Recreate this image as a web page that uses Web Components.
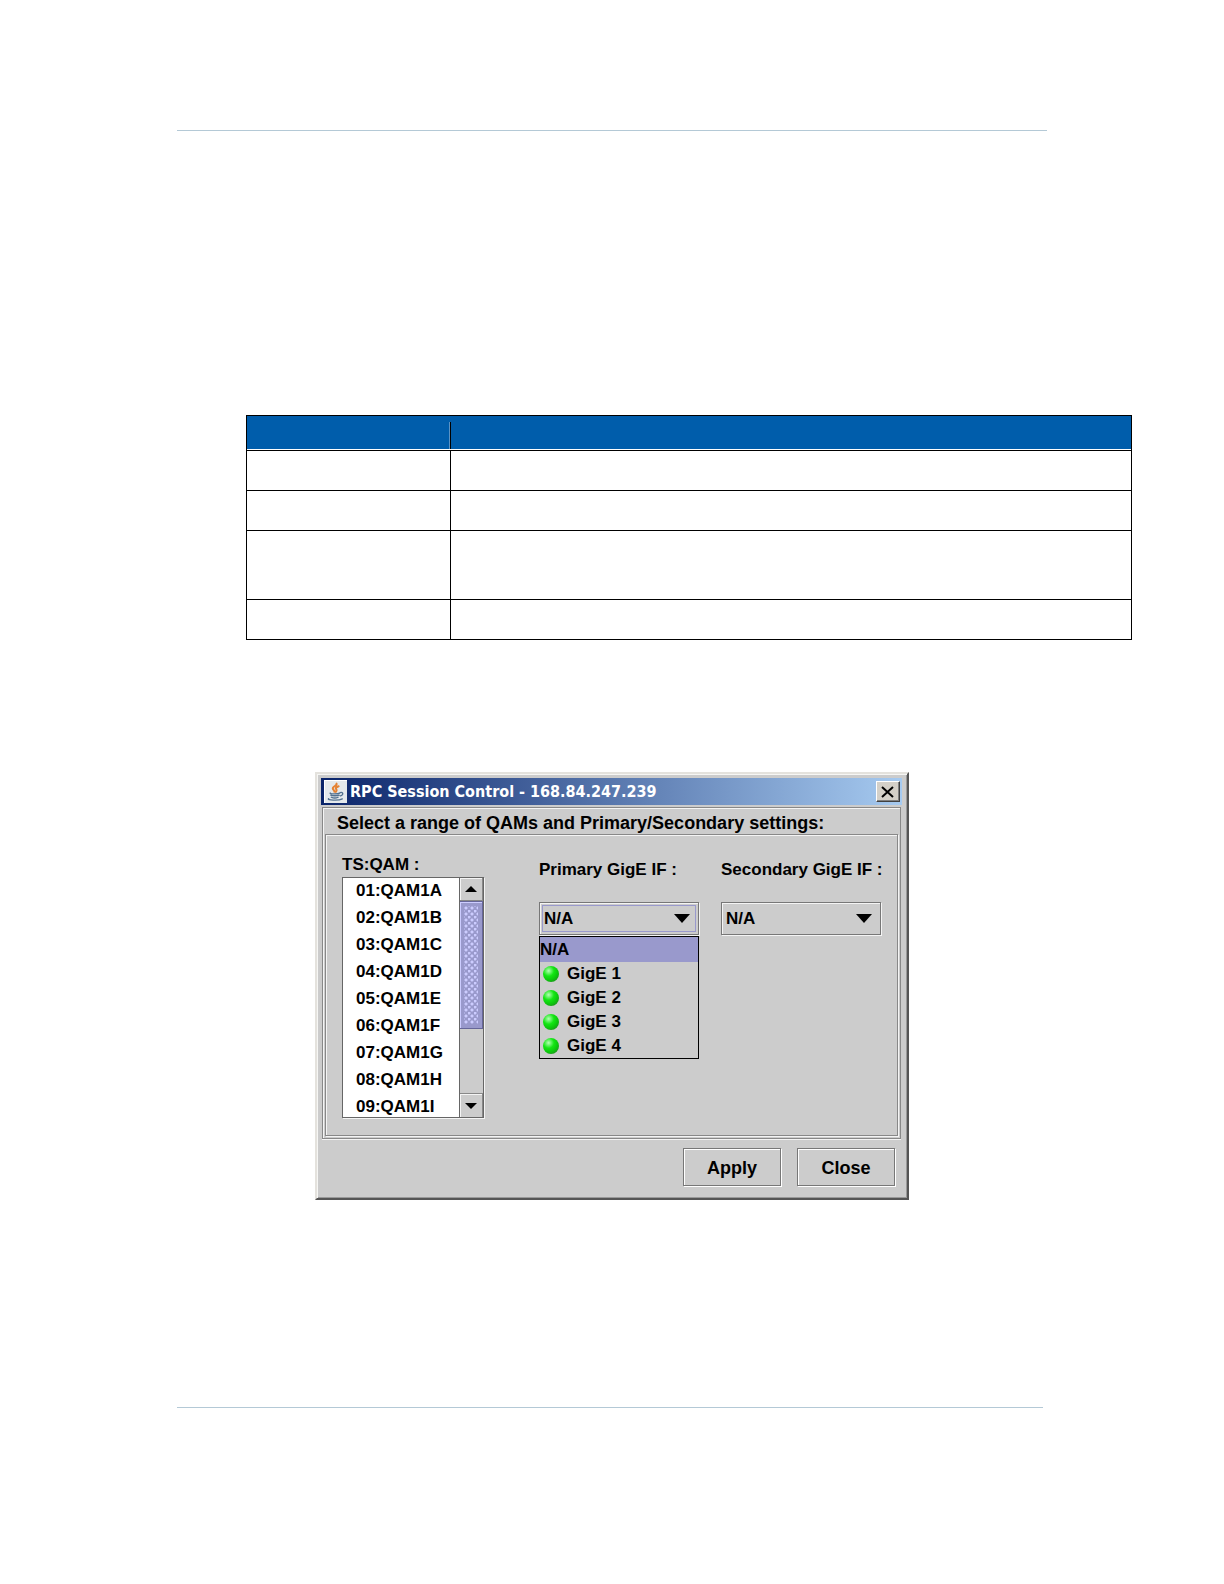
<!DOCTYPE html>
<html lang="en">
<head>
<meta charset="utf-8">
<meta name="viewport" content="width=device-width, initial-scale=1">
<title>RPC Session Control</title>
<style>
  body {
    margin: 0;
    background: #fff;
    color: #000;
    font-family: "Liberation Sans", Arial, sans-serif;
  }
</style>
</head>
<body>
<manual-page>
  <field-table></field-table>
  <java-dialog heading="RPC Session Control - 168.84.247.239">
    <titled-panel heading="Select a range of QAMs and Primary/Secondary settings:">
      <qam-list label="TS:QAM :" items="01:QAM1A,02:QAM1B,03:QAM1C,04:QAM1D,05:QAM1E,06:QAM1F,07:QAM1G,08:QAM1H,09:QAM1I"></qam-list>
      <gige-combo label="Primary GigE IF :" focused open></gige-combo>
      <gige-combo label="Secondary GigE IF :"></gige-combo>
    </titled-panel>
    <metal-button slot="actions">Apply</metal-button>
    <metal-button slot="actions">Close</metal-button>
  </java-dialog>
</manual-page>

<script>
(function () {

  const ICONS = {
    java: `<svg viewBox="0 0 22 22" fill="none" stroke-linecap="round"><rect width="22" height="22" fill="#e4e9ec"/><path d="M0 .5h22M.5 0v22" stroke="#fff"/><path d="M12 3.500c1 2-4.500 2.500-3.500 5 .400 1.200 1.800 1.500 1.400 2.700M14 6c-2.600 1-3.300 1.800-2.400 2.800 .8 1 .7 1.600-.4 2.600" stroke="#e58232" stroke-width="1.900"/><path d="M6 12.500c-1.500.9 7 1.100 9 0M6.500 14.500c1.500.8 6 .8 8 0M7 16.500c1.500.7 5 .7 6.500 0M4.500 17.800c-2.500 1.500 9.500 2.300 13 .3M15.500 12c3.200-.8 3.200 2.500.2 3.200" stroke="#53718f" stroke-width="1.300"/></svg>`,
    close: `<svg viewBox="0 0 14 14" fill="none" stroke="#000" stroke-width="2"><path d="M1 2l11 10M12 2L1 12"/></svg>`,
    up: `<svg viewBox="0 0 12 6"><path d="M6 0l6 6H0z"/></svg>`,
    down: `<svg viewBox="0 0 12 6"><path d="M0 0h12L6 6z"/></svg>`,
    arrow: `<svg viewBox="0 0 16 9"><path d="M0 0h16L8 9z"/></svg>`,
  }

  const RESET = `
    * {
      margin: 0;
      padding: 0;
      box-sizing: border-box;
    }
    svg {
      display: block;
    }
  `;

  class ManualPage extends HTMLElement {
    constructor() {
      super();
      this.attachShadow({mode: 'open'});
      this.shadowRoot.innerHTML = `
        <style>
        ${RESET}
        :host {
          display: flex;
          flex-direction: column;
          padding: 130px 0 176px;
        }
        hr {
          border: 0;
          height: 1px;
          background: #b4c9d6;
          margin: 0 177px;
        }
        hr:last-child {
          margin-right: 181px;
        }
        main {
          display: flex;
          flex-direction: column;
          gap: 132px;
          padding: 284px 0 207px;
        }
        </style>
        <hr>
        <main><slot></slot></main>
        <hr>
      `;
    }
  }

  class FieldTable extends HTMLElement {
    constructor() {
      super();
      this.attachShadow({mode: 'open'});
      this.shadowRoot.innerHTML = `
        <style>
        ${RESET}
        :host {
          display: block;
          margin: 0 92px 0 246px;
        }
        table {
          width: 100%;
          border-collapse: separate;
          border-spacing: 0;
          border: 1px solid #000;
          border-bottom: 0;
          table-layout: fixed;
        }
        col:first-child {
          width: 204px;
        }
        th, td {
          height: 40px;
          border-bottom: 1px solid #000;
        }
        th {
          height: 35px;
          background: linear-gradient(#fff, #fff) bottom / 100% 1px no-repeat #005dab;
        }
        th:first-child {
          background:
            linear-gradient(#fff, #fff) bottom / 100% 1px no-repeat,
            linear-gradient(#000, #000) right 6px / 1px 100% no-repeat,
            linear-gradient(#5c93c4, #5c93c4) right 1px top 6px / 1px 100% no-repeat,
            #005dab;
        }
        td:first-child {
          border-right: 1px solid #000;
        }
        .tall td {
          height: 69px;
        }
        </style>
        <table>
          <colgroup><col><col></colgroup>
          <thead><tr><th></th><th></th></tr></thead>
          <tbody>
            <tr><td></td><td></td></tr>
            <tr><td></td><td></td></tr>
            <tr class="tall"><td></td><td></td></tr>
            <tr><td></td><td></td></tr>
          </tbody>
        </table>
      `;
    }
  }

  class JavaDialog extends HTMLElement {
    constructor() {
      super();
      this.attachShadow({mode: 'open'});
      this.shadowRoot.innerHTML = `
        <style>
        ${RESET}
        :host {
          display: block;
          margin: 0 315px;
          padding: 4px 5px 12px 4px;
          background: #ccc;
          border: 2px solid;
          border-color: #e4e2dd #555 #555 #e4e2dd;
          box-shadow: inset 1px 1px #f6f6f4, inset -1px -1px #999;
        }
        header {
          display: flex;
          align-items: center;
          gap: 3px;
          height: 27px;
          padding: 0 2px 0 3px;
          background: linear-gradient(90deg, #0a246a, #a6caf0);
        }
        header svg {
          width: 23px;
          height: 23px;
        }
        h1 {
          flex: 1;
          color: #fff;
          font: bold 16px/24px "DejaVu Sans Condensed", "Noto Sans", sans-serif;
          white-space: nowrap;
        }
        header button {
          display: grid;
          place-items: center;
          width: 24px;
          height: 21px;
          background: #d4d0c8;
          border: 1px solid;
          border-color: #fff #404040 #404040 #fff;
          box-shadow: inset -1px -1px #808080;
        }
        header button svg {
          width: 14px;
          height: 14px;
        }
        .actions {
          display: flex;
          justify-content: flex-end;
          gap: 16px;
          padding: 9px 7px 0;
        }
        </style>
        <header>
          ${ICONS['java']}
          <h1>${this.getAttribute('heading')}</h1>
          <button aria-label="Close window">${ICONS['close']}</button>
        </header>
        <slot></slot>
        <div class="actions"><slot name="actions"></slot></div>
      `;
    }
  }

  class TitledPanel extends HTMLElement {
    constructor() {
      super();
      this.attachShadow({mode: 'open'});
      this.shadowRoot.innerHTML = `
        <style>
        ${RESET}
        :host {
          display: block;
          margin: 2px 1px 0;
          padding: 2px;
          border: 1px solid #888;
          box-shadow: inset 1px 1px #f4f4f4, 0 1px #f4f4f4;
        }
        h2 {
          height: 24px;
          padding-left: 12px;
          font: bold 18px/26px "Liberation Sans", Arial, sans-serif;
          white-space: nowrap;
        }
        .body {
          display: flex;
          align-items: flex-start;
          height: 302px;
          padding: 11px 16px;
          border: 1px solid #888;
          box-shadow: inset 1px 1px #f4f4f4, 1px 1px #f4f4f4;
        }
        </style>
        <h2>${this.getAttribute('heading')}</h2>
        <div class="body"><slot></slot></div>
      `;
    }
  }

  class QamList extends HTMLElement {
    constructor() {
      super();
      this.attachShadow({mode: 'open'});
      const items = this.getAttribute('items').split(',');
      this.shadowRoot.innerHTML = `
        <style>
        ${RESET}
        :host {
          display: block;
          width: 142px;
          margin-right: 55px;
        }
        label {
          display: block;
          font: bold 17px/24px "Liberation Sans", Arial, sans-serif;
          margin: 7px 0 0;
        }
        .box {
          display: flex;
          height: 241px;
          border: 1px solid #666;
          box-shadow: 1px 1px #f4f4f4;
        }
        select {
          flex: 1;
          min-width: 0;
          height: 239px;
          padding: 3px 0 0;
          border: 0;
          border-radius: 0;
          outline: 0;
          background: #fff;
          color: #000;
          font: bold 17px/27px "Liberation Sans", Arial, sans-serif;
          overflow: hidden;
          scrollbar-width: none;
        }
        option {
          height: 27px;
          min-height: 27px;
          padding: 0 0 0 13px;
          font: bold 17px/27px "Liberation Sans", Arial, sans-serif;
        }
        .bar {
          display: flex;
          flex-direction: column;
          width: 24px;
          border-left: 1px solid #666;
          background: #ccc;
        }
        button {
          display: grid;
          place-items: center;
          height: 23px;
          background: #ccc;
          border: 1px solid #888;
          border-width: 0 1px 1px 0;
          box-shadow: inset 1px 1px #f4f4f4;
        }
        button:last-child {
          height: 24px;
          border-width: 1px 1px 0 0;
        }
        button svg {
          width: 12px;
          height: 6px;
        }
        .thumb {
          height: 128px;
          padding: 4px;
          border: 1px solid #666699;
          border-left-width: 0;
          background:
            radial-gradient(circle at 1px 1px, #ccccff 1px, transparent 2px) 4px 4px / 6px 6px content-box,
            radial-gradient(circle at 4px 4px, #ccccff 1px, transparent 2px) 4px 4px / 6px 6px content-box,
            #9999cc;
          box-shadow: inset 1px 1px #ccccff;
        }
        .track {
          flex: 1;
        }
        </style>
        <label for="qams">${this.getAttribute('label')}</label>
        <div class="box">
          <select id="qams" multiple size="9">
            ${items.map(item => `<option>${item}</option>`).join('')}
          </select>
          <div class="bar">
            <button aria-label="Scroll up">${ICONS['up']}</button>
            <div class="thumb"></div>
            <div class="track"></div>
            <button aria-label="Scroll down">${ICONS['down']}</button>
          </div>
        </div>
      `;
    }
  }

  class GigeCombo extends HTMLElement {
    constructor() {
      super();
      this.attachShadow({mode: 'open'});
      const ports = [1, 2, 3, 4];
      this.shadowRoot.innerHTML = `
        <style>
        ${RESET}
        :host {
          display: block;
          position: relative;
          width: 160px;
          margin-right: 22px;
        }
        :host(:last-child) {
          margin-right: 0;
        }
        label {
          display: block;
          margin: 11px 0 20px;
          font: bold 17px/25px "Liberation Sans", Arial, sans-serif;
          white-space: nowrap;
        }
        .field {
          display: grid;
          align-items: center;
          height: 33px;
          padding: 2px;
          border: 1px solid #777;
          box-shadow: inset 1px 1px #f4f4f4, 1px 1px #f4f4f4;
        }
        .field > * {
          grid-area: 1 / 1;
        }
        select {
          width: 100%;
          height: 27px;
          padding-left: 1px;
          appearance: none;
          background: transparent;
          border: 1px solid transparent;
          border-radius: 0;
          outline: 0;
          color: #000;
          font: bold 17px/25px "Liberation Sans", Arial, sans-serif;
        }
        :host([focused]) select {
          border-color: #9999cc;
        }
        .field svg {
          justify-self: end;
          width: 16px;
          height: 9px;
          margin-right: 6px;
          pointer-events: none;
        }
        ul {
          display: none;
          position: absolute;
          top: 100%;
          left: 0;
          right: 0;
          margin-top: 1px;
          list-style: none;
          background: #ccc;
          border: 1px solid #000;
          font: bold 17px/24px "Liberation Sans", Arial, sans-serif;
        }
        :host([open]) ul {
          display: block;
        }
        li {
          display: flex;
          align-items: center;
          gap: 8px;
          height: 24px;
          padding-left: 3px;
        }
        li[aria-selected] {
          height: 25px;
          padding-left: 0;
          background: #9999cc;
        }
        i {
          width: 16px;
          height: 16px;
          border-radius: 50%;
          background: radial-gradient(circle at 35% 30%, #b4ffb4, #14e614 35%, #0cc80c 60%, #2c6a2c);
        }
        </style>
        <label for="port">${this.getAttribute('label')}</label>
        <div class="field">
          <select id="port">
            <option>N/A</option>
            ${ports.map(port => `<option>GigE ${port}</option>`).join('')}
          </select>
          ${ICONS['arrow']}
        </div>
        ${this.hasAttribute('open') ? `
        <ul role="listbox">
          <li role="option" aria-selected="true">N/A</li>
          ${ports.map(port => `<li role="option"><i></i>GigE ${port}</li>`).join('')}
        </ul>` : ''}
      `;
    }
  }

  class MetalButton extends HTMLElement {
    constructor() {
      super();
      this.attachShadow({mode: 'open'});
      this.shadowRoot.innerHTML = `
        <style>
        ${RESET}
        :host {
          display: block;
        }
        button {
          width: 98px;
          height: 38px;
          padding-top: 2px;
          background: #ccc;
          border: 1px solid #777;
          box-shadow: inset 1px 1px #fff, 1px 1px #fff;
          color: #000;
          font: bold 18px/24px "Liberation Sans", Arial, sans-serif;
        }
        </style>
        <button><slot></slot></button>
      `;
    }
  }

  customElements.define('manual-page', ManualPage);
  customElements.define('field-table', FieldTable);
  customElements.define('java-dialog', JavaDialog);
  customElements.define('titled-panel', TitledPanel);
  customElements.define('qam-list', QamList);
  customElements.define('gige-combo', GigeCombo);
  customElements.define('metal-button', MetalButton);
})();
</script>
</body>
</html>
